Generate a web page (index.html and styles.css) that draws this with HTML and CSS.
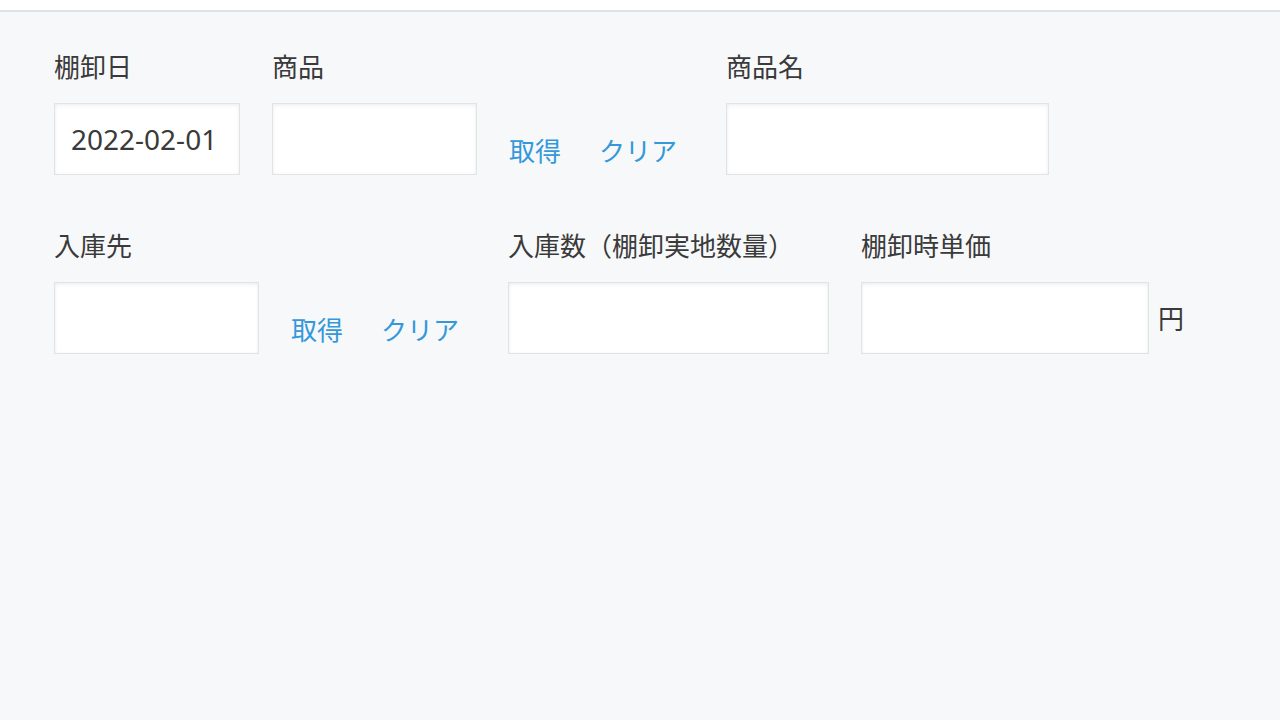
FILE: index.html
```html
<!DOCTYPE html>
<html lang="ja">
  <head>
    <meta charset="UTF-8" />
    <meta name="viewport" content="width=device-width, initial-scale=1.0" />
    <title>棚卸</title>
    <link rel="stylesheet" href="styles.css">
  </head>
  <body>
    <div class="topbar"></div>
    <form class="record">
      <div class="record__row">
        <div class="field">
          <label class="field__label">棚卸日</label>
          <div class="field__control">
            <input class="input input--date" type="text" value="2022-02-01" />
          </div>
        </div>
        <div class="field field--lookup">
          <label class="field__label">商品</label>
          <div class="field__control">
            <input class="input input--lookup" type="text" />
            <div class="lookup">
              <a class="lookup__action" href="#">取得</a>
              <a class="lookup__action" href="#">クリア</a>
            </div>
          </div>
        </div>
        <div class="field">
          <label class="field__label">商品名</label>
          <div class="field__control">
            <input class="input input--name" type="text" />
          </div>
        </div>
      </div>

      <div class="record__row">
        <div class="field field--lookup">
          <label class="field__label">入庫先</label>
          <div class="field__control">
            <input class="input input--lookup" type="text" />
            <div class="lookup">
              <a class="lookup__action" href="#">取得</a>
              <a class="lookup__action" href="#">クリア</a>
            </div>
          </div>
        </div>
        <div class="field">
          <label class="field__label">入庫数（棚卸実地数量）</label>
          <div class="field__control">
            <input class="input input--qty" type="text" />
          </div>
        </div>
        <div class="field">
          <label class="field__label">棚卸時単価</label>
          <div class="field__control">
            <input class="input input--price" type="text" />
            <span class="field__unit">円</span>
          </div>
        </div>
      </div>
    </form>
  </body>
</html>
```

FILE: styles.css
```css
* {
  margin: 0;
  padding: 0;
  box-sizing: border-box;
}
body {
  font-family: "Noto Sans CJK JP", "Noto Sans", sans-serif;
  background-color: #f7f8fa;
  color: #3a3a3a;
  min-height: 100vh;
}
.topbar {
  height: 12px;
  background-color: #fff;
  border-bottom: 2px solid #e1e2e4;
}
.record {
  padding: 36px 0 0 54px;
  display: flex;
  flex-direction: column;
  gap: 52px;
}
.record__row {
  display: flex;
  align-items: flex-start;
  gap: 32px;
}
.field {
  display: flex;
  flex-direction: column;
  gap: 19px;
}
.field--lookup {
  margin-right: 17px;
}
.field__label {
  font-size: 26px;
  line-height: 36px;
  color: #3a3a3a;
  white-space: nowrap;
}
.field__control {
  display: flex;
  align-items: flex-end;
}
.field__unit {
  align-self: center;
  margin-left: 9px;
  font-size: 26px;
  line-height: 36px;
  color: #3a3a3a;
}
.input {
  height: 72px;
  border: 1px solid #e1e4e6;
  background-color: #fff;
  box-shadow: inset 0 2px 4px rgba(0, 0, 0, 0.05), inset 0 0 3px rgba(0, 0, 0, 0.04);
  padding: 0 16px;
  font-family: "Noto Sans", "Noto Sans CJK JP", sans-serif;
  font-size: 28px;
  color: #3a3a3a;
  outline: none;
}
.input--date {
  width: 186px;
}
.input--lookup {
  width: 205px;
}
.input--name {
  width: 323px;
}
.input--qty {
  width: 321px;
}
.input--price {
  width: 288px;
}
.lookup {
  display: flex;
  gap: 38px;
  margin-left: 32px;
  padding-bottom: 7px;
}
.lookup__action {
  font-size: 26px;
  line-height: 36px;
  color: #3498db;
  text-decoration: none;
  white-space: nowrap;
}
.lookup__action:hover {
  text-decoration: underline;
}
```
